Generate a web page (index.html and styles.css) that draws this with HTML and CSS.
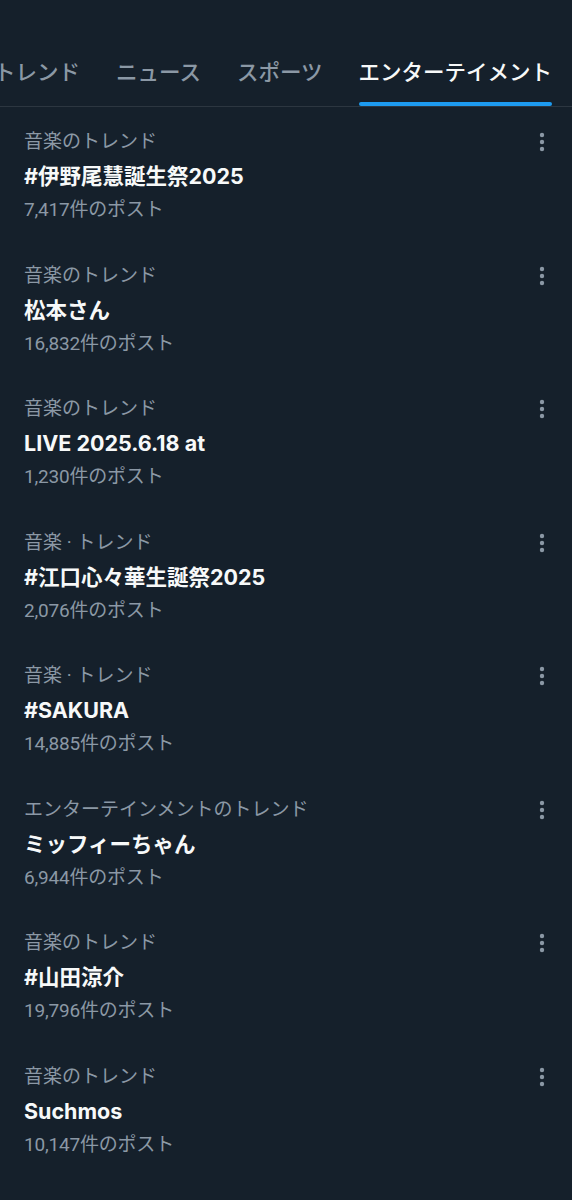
FILE: index.html
```html
<!DOCTYPE html>
<html lang="ja">
<head>
  <meta charset="UTF-8" />
  <meta name="viewport" content="width=device-width, initial-scale=1.0"/>
  <title>エンターテイメント</title>
  <link rel="stylesheet" href="styles.css">
</head>
<body>
  <!-- Tabs -->
  <nav class="tabs">
    <div class="tab">トレンド</div>
    <div class="tab">ニュース</div>
    <div class="tab">スポーツ</div>
    <div class="tab active">エンターテイメント</div>
  </nav>

  <!-- Trend list -->
  <ul class="trends">
    <li class="trend">
      <div class="trend-body">
        <div class="trend-label">音楽のトレンド</div>
        <div class="trend-title">#伊野尾慧誕生祭2025</div>
        <div class="trend-count">7,417件のポスト</div>
      </div>
      <svg class="more" viewBox="0 0 8 24"><circle cx="4" cy="5" r="2.2"/><circle cx="4" cy="12" r="2.2"/><circle cx="4" cy="19" r="2.2"/></svg>
    </li>
    <li class="trend">
      <div class="trend-body">
        <div class="trend-label">音楽のトレンド</div>
        <div class="trend-title">松本さん</div>
        <div class="trend-count">16,832件のポスト</div>
      </div>
      <svg class="more" viewBox="0 0 8 24"><circle cx="4" cy="5" r="2.2"/><circle cx="4" cy="12" r="2.2"/><circle cx="4" cy="19" r="2.2"/></svg>
    </li>
    <li class="trend">
      <div class="trend-body">
        <div class="trend-label">音楽のトレンド</div>
        <div class="trend-title">LIVE 2025.6.18 at</div>
        <div class="trend-count">1,230件のポスト</div>
      </div>
      <svg class="more" viewBox="0 0 8 24"><circle cx="4" cy="5" r="2.2"/><circle cx="4" cy="12" r="2.2"/><circle cx="4" cy="19" r="2.2"/></svg>
    </li>
    <li class="trend">
      <div class="trend-body">
        <div class="trend-label">音楽 · トレンド</div>
        <div class="trend-title">#江口心々華生誕祭2025</div>
        <div class="trend-count">2,076件のポスト</div>
      </div>
      <svg class="more" viewBox="0 0 8 24"><circle cx="4" cy="5" r="2.2"/><circle cx="4" cy="12" r="2.2"/><circle cx="4" cy="19" r="2.2"/></svg>
    </li>
    <li class="trend">
      <div class="trend-body">
        <div class="trend-label">音楽 · トレンド</div>
        <div class="trend-title">#SAKURA</div>
        <div class="trend-count">14,885件のポスト</div>
      </div>
      <svg class="more" viewBox="0 0 8 24"><circle cx="4" cy="5" r="2.2"/><circle cx="4" cy="12" r="2.2"/><circle cx="4" cy="19" r="2.2"/></svg>
    </li>
    <li class="trend">
      <div class="trend-body">
        <div class="trend-label">エンターテインメントのトレンド</div>
        <div class="trend-title">ミッフィーちゃん</div>
        <div class="trend-count">6,944件のポスト</div>
      </div>
      <svg class="more" viewBox="0 0 8 24"><circle cx="4" cy="5" r="2.2"/><circle cx="4" cy="12" r="2.2"/><circle cx="4" cy="19" r="2.2"/></svg>
    </li>
    <li class="trend">
      <div class="trend-body">
        <div class="trend-label">音楽のトレンド</div>
        <div class="trend-title">#山田涼介</div>
        <div class="trend-count">19,796件のポスト</div>
      </div>
      <svg class="more" viewBox="0 0 8 24"><circle cx="4" cy="5" r="2.2"/><circle cx="4" cy="12" r="2.2"/><circle cx="4" cy="19" r="2.2"/></svg>
    </li>
    <li class="trend">
      <div class="trend-body">
        <div class="trend-label">音楽のトレンド</div>
        <div class="trend-title">Suchmos</div>
        <div class="trend-count">10,147件のポスト</div>
      </div>
      <svg class="more" viewBox="0 0 8 24"><circle cx="4" cy="5" r="2.2"/><circle cx="4" cy="12" r="2.2"/><circle cx="4" cy="19" r="2.2"/></svg>
    </li>
  </ul>
</body>
</html>
```

FILE: styles.css
```css
body {
  margin: 0;
  background-color: #15202b;
  font-family: Roboto, "Noto Sans CJK JP", sans-serif;
  color: #f7f9f9;
  height: 1200px;
  overflow: hidden;
}

.tabs {
  display: flex;
  margin-left: -24px;
  border-bottom: 1px solid #2c3640;
  white-space: nowrap;
}

.tab {
  padding: 58px 18px 0;
  font-size: 21.5px;
  line-height: 30px;
  color: #8b98a5;
  font-weight: 500;
}

.tab::after {
  content: "";
  display: block;
  height: 4px;
  margin-top: 14px;
  border-radius: 2px;
  background: transparent;
}

.tab.active {
  color: #f7f9f9;
  padding-right: 16px;
}

.tab.active::after {
  background: #1d9bf0;
}

.trends {
  list-style: none;
  margin: 0;
  padding: 0;
}

.trend {
  display: flex;
  justify-content: space-between;
  align-items: flex-start;
  padding: 18px 24px 14.5px;
}

.trend-label,
.trend-count {
  font-size: 19px;
  line-height: 34px;
  color: #8b98a5;
}

.trend-count {
  line-height: 33px;
  letter-spacing: -0.2px;
}

.trend-title {
  font-family: Inter, "Noto Sans CJK JP", sans-serif;
  font-size: 21.5px;
  line-height: 34px;
  font-weight: 700;
}

.more {
  width: 8px;
  height: 24px;
  margin: 5px 2px 0 0;
  fill: #8b98a5;
}
```
